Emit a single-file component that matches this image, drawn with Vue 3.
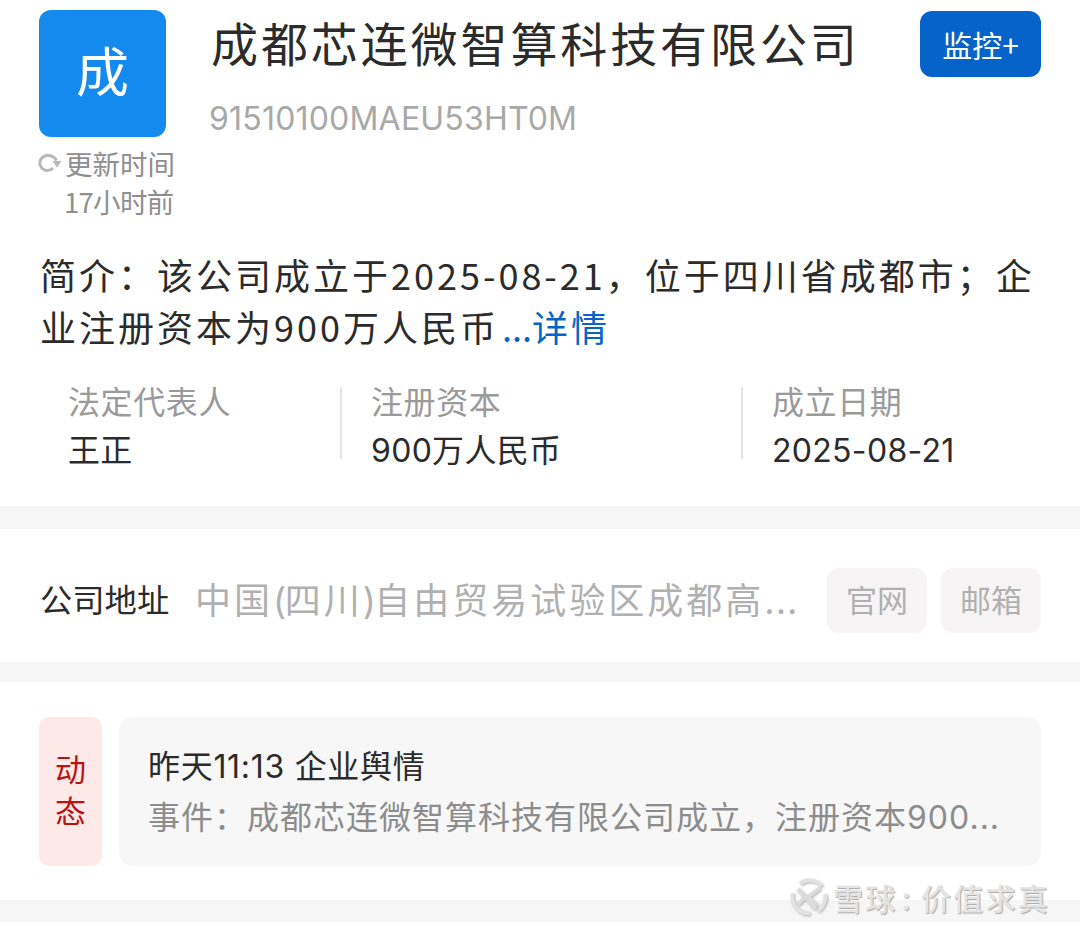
<template>
  <div class="page">
    <section class="head">
      <div class="brand">
        <div class="avatar">成</div>
        <div class="update">
          <div class="update-line">
            <svg class="refresh" viewBox="0 0 24 24" width="24" height="24" aria-hidden="true">
              <path d="M18.5 9.5C17 6.5 13.5 4.5 9.5 4.5A7.5 7.5 0 1 0 15 17" fill="none" stroke="#b8b8b8" stroke-width="3" />
              <path d="M14.5 10 23.5 10 19 16.5Z" fill="#b8b8b8" />
            </svg>
            <span>更新时间</span>
          </div>
          <div class="update-ago">17小时前</div>
        </div>
      </div>
      <div class="names">
        <h1>成都芯连微智算科技有限公司</h1>
        <div class="code">91510100MAEU53HT0M</div>
      </div>
      <button class="monitor">监控+</button>
    </section>

    <p class="intro">简介：该公司成立于2025-08-21，位于四川省成都市；企业注册资本为900万人民币<span class="more"><span class="dots">...</span>详情</span></p>

    <section class="facts">
      <div v-for="f in facts" :key="f.label" class="fact" :class="f.cls">
        <div class="fact-label">{{ f.label }}</div>
        <div class="fact-value">{{ f.value }}</div>
      </div>
    </section>

    <div class="band band-a"></div>

    <section class="address">
      <div class="addr-label">公司地址</div>
      <div class="addr-text">中国<span class="paren">(</span>四川<span class="paren">)</span>自由贸易试验区成都高<span class="dots">...</span></div>
      <div class="chip">官网</div>
      <div class="chip">邮箱</div>
    </section>

    <div class="band band-b"></div>

    <section class="news">
      <div class="tag">动<br />态</div>
      <div class="card">
        <div class="card-title">昨天11:13 企业舆情</div>
        <div class="card-text">事件：成都芯连微智算科技有限公司成立，注册资本900<span class="dots">...</span></div>
      </div>
    </section>

    <div class="band band-c"></div>

    <div class="mark">
      <svg class="logo" viewBox="0 0 40 40" width="40" height="40" aria-hidden="true">
        <path d="M11 6.5A16.5 16.5 0 0 1 33 9M36 17A16.5 16.5 0 0 1 29 34M21 36.500A16.500 16.500 0 0 1 4 16" fill="none" stroke="#e2e2e2" stroke-width="3.600" />
        <path d="M9 12 27 32M31 11 19 20 28 29M9 27 18 18" fill="none" stroke="#dcdcdc" stroke-width="4" />
      </svg>
      <span>雪球<span class="colon">:</span>价值求真</span>
    </div>
  </div>
</template>

<script setup>
const facts = [
  { label: '法定代表人', value: '王正', cls: 'f1' },
  { label: '注册资本', value: '900万人民币', cls: 'f2' },
  { label: '成立日期', value: '2025-08-21', cls: 'f3' }
]
</script>

<style>
html, body { margin: 0; background: #fff; }
</style>

<style scoped>
.page {
  position: relative;
  width: 1080px;
  height: 932px;
  overflow: hidden;
  background: #fff;
  color: #2b2b2b;
  font-family: "Noto Sans CJK SC", "Noto Sans", sans-serif;
}
.head {
  display: flex;
  align-items: flex-start;
  height: 228px;
  padding: 10px 39px 0;
  box-sizing: border-box;
}
.brand { width: 172px; flex: none; }
.avatar {
  width: 127px;
  height: 127px;
  border-radius: 12px;
  background: #1489ee;
  color: #fff;
  font-size: 53px;
  line-height: 119px;
  text-align: center;
}
.update { margin-top: 7px; color: #8f8f8f; font-size: 27.500px; line-height: 38px; white-space: nowrap; }
.update-line { display: flex; align-items: center; }
.refresh { flex: none; margin-left: -1px; margin-right: 3px; }
.update-ago { padding-left: 25px; letter-spacing: -0.7px; }
.names { flex: 1; }
h1 {
  margin: 0;
  margin-top: -2px;
  font-size: 47px;
  font-weight: 400;
  letter-spacing: 2.900px;
  line-height: 68px;
  white-space: nowrap;
}
.code {
  margin-top: 20px;
  margin-left: -2px;
  color: #a8a8a8;
  font-family: Inter, "Noto Sans", sans-serif;
  font-size: 32px;
  letter-spacing: .2px;
  line-height: 46px;
}
.monitor {
  flex: none;
  width: 121px;
  height: 66px;
  margin-top: 1px;
  border: 0;
  border-radius: 12px;
  background: #0563c9;
  color: #fff;
  font: inherit;
  font-size: 30px;
  padding: 0;
}
.intro {
  margin: 0;
  padding: 20px 40px 0;
  font-size: 36px;
  letter-spacing: 3px;
  line-height: 52px;
  height: 134px;
  box-sizing: border-box;
}
.more { color: #0563c9; margin-left: 3px; }
.intro .dots { letter-spacing: 0; }
.facts { display: flex; height: 144px; padding-top: 25px; box-sizing: border-box; }
.fact { height: 72px; box-sizing: border-box; }
.f1 { width: 340px; padding-left: 68px; }
.f2 { width: 401px; padding-left: 29px; border-left: 2px solid #e4e4e4; }
.f3 { flex: 1; padding-left: 29px; border-left: 2px solid #e4e4e4; }
.fact-label { margin-top: -2px; color: #9a9a9a; font-size: 32px; line-height: 30px; letter-spacing: .6px; white-space: nowrap; }
.fact-value {
  margin-top: 21px;
  font-family: Inter, "Noto Sans CJK SC", sans-serif;
  font-size: 32px;
  letter-spacing: .3px;
  line-height: 30px;
  white-space: nowrap;
}
.band { background: #f6f6f6; }
.band-a { height: 23px; }
.band-b { height: 20px; }
.band-c { height: 22px; }
.address {
  display: flex;
  align-items: center;
  height: 133px;
  padding: 10px 39px 0 40px;
  box-sizing: border-box;
}
.addr-label { flex: none; width: 156px; font-size: 32.300px; line-height: 44px; margin-top: -5px; }
.addr-text {
  width: 607px;
  flex: none;
  color: #b0b0b0;
  font-family: Inter, "Noto Sans CJK SC", sans-serif;
  font-size: 36px;
  letter-spacing: 3px;
  line-height: 46px;
  margin-top: 1px;
  margin-left: -1px;
  white-space: nowrap;
}
.paren { letter-spacing: -1.500px; }
.addr-text .dots { letter-spacing: 1px; }
.chip {
  flex: none;
  width: 100px;
  height: 65px;
  margin-left: 14px;
  border-radius: 12px;
  background: #f6f4f4;
  color: #b0b0b0;
  font-size: 31px;
  line-height: 61px;
  text-align: center;
}
.addr-text + .chip { margin-left: 25px; }
.news { display: flex; height: 218px; padding: 35px 39px 0; box-sizing: border-box; }
.tag {
  width: 63px;
  height: 149px;
  flex: none;
  box-sizing: border-box;
  padding-top: 30px;
  border-radius: 10px;
  background: #fde9e7;
  color: #b81414;
  font-size: 31px;
  line-height: 42px;
  text-align: center;
}
.card {
  flex: 1;
  min-width: 0;
  height: 149px;
  margin-left: 17px;
  padding: 28px 20px 0 29px;
  box-sizing: border-box;
  border-radius: 14px;
  background: #f7f7f7;
}
.card-title {
  font-family: Inter, "Noto Sans CJK SC", sans-serif;
  font-size: 32px;
  letter-spacing: .7px;
  line-height: 44px;
  white-space: nowrap;
}
.card-text {
  margin-top: 7px;
  color: #8c8c8c;
  font-family: Inter, "Noto Sans CJK SC", sans-serif;
  font-size: 32px;
  letter-spacing: 1px;
  line-height: 44px;
  white-space: nowrap;
}
.card-text .dots { letter-spacing: 1px; }
.mark {
  position: absolute;
  right: 30px;
  top: 875px;
  display: flex;
  align-items: center;
  gap: 4px;
  color: #e4e4e4;
  font-size: 30px;
  font-weight: 500;
  letter-spacing: 2.300px;
  line-height: 44px;
  text-shadow: 1px 1px 1px #a8a8a8, -1px -1px 0 #fff;
  white-space: nowrap;
}
.logo { flex: none; filter: drop-shadow(1px 1px 1px #b0b0b0); }
.colon { padding: 0 8px 0 4px; }
</style>
